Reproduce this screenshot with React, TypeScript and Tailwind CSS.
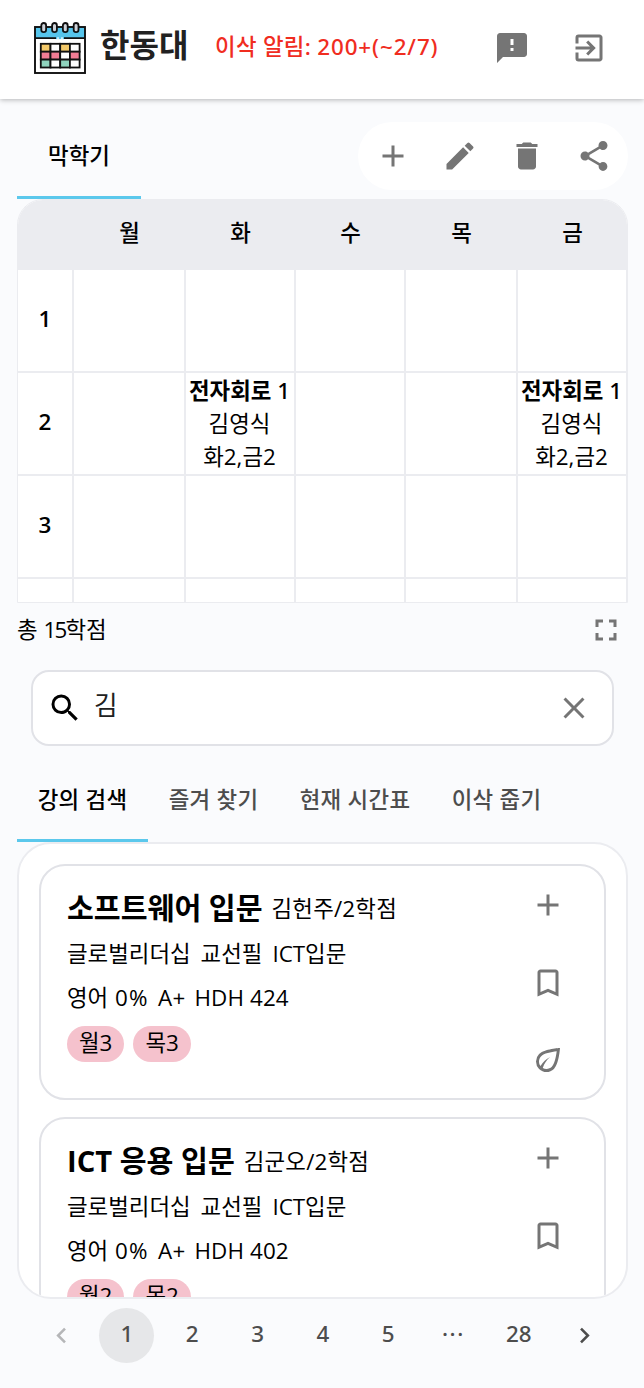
import React from "react";
import {
  MdAdd,
  MdBookmarkBorder,
  MdChevronLeft,
  MdChevronRight,
  MdClose,
  MdDelete,
  MdEdit,
  MdExitToApp,
  MdFeedback,
  MdFullscreen,
  MdOutlineEco,
  MdSearch,
  MdShare,
} from "react-icons/md";

const days = ["월", "화", "수", "목", "금"];

type Lecture = { title: string; section: string; professor: string; time: string };

const circuit: Lecture = { title: "전자회로", section: "1", professor: "김영식", time: "화2,금2" };

const periods: { no: string; cells: (Lecture | null)[] }[] = [
  { no: "1", cells: [null, null, null, null, null] },
  { no: "2", cells: [null, circuit, null, null, circuit] },
  { no: "3", cells: [null, null, null, null, null] },
];

const results = [
  { title: "소프트웨어 입문", professor: "김헌주/2학점", room: "HDH 424", slots: ["월3", "목3"] },
  { title: "ICT 응용 입문", professor: "김군오/2학점", room: "HDH 402", slots: ["월2", "목2"] },
];

function CalendarLogo() {
  const fills = [
    ["#f3c969", "#fff", "#f3c969", "#fff"],
    ["#f27d95", "#f27d95", "#fff", "#f27d95"],
    ["#8fd3bd", "#fff", "#8fd3bd", "#fff"],
  ];
  return (
    <svg width="52" height="52" viewBox="0 0 52 52" className="shrink-0">
      <rect x="1" y="5" width="50" height="46" fill="#fff" />
      <rect x="1" y="5" width="50" height="11" fill="#56c5ec" />
      <rect x="1" y="5" width="50" height="46" fill="none" stroke="#111" strokeWidth="1.9" />
      <path d="M1 16.2H22M30 16.2H51" stroke="#111" strokeWidth="1.8" />
      <path d="M22 16.2H30" stroke="#56c5ec" strokeWidth="1.8" />
      <path d="M23.2 16.2H24.8M27.2 16.2H28.8" stroke="#e6f6fc" strokeWidth="1.8" />
      {[9.7, 20.5, 31.3, 42.1].map((x) => (
        <rect key={x} x={x - 2.4} y="1" width="4.8" height="9.2" rx="2.4" fill="#cfd3da" stroke="#111" strokeWidth="1.8" />
      ))}
      {fills.map((row, r) =>
        row.map((fill, c) => (
          <rect key={`${r}-${c}`} x={6.8 + c * 9.7} y={21.8 + r * 7.9} width="9.7" height="7.9" fill={fill} stroke="#111" strokeWidth="1.8" />
        )),
      )}
    </svg>
  );
}

function Slot({ children }: { children: React.ReactNode }) {
  return <div className="flex w-[65.3px] items-center justify-center">{children}</div>;
}

export default function App() {
  return (
    <div className="flex h-[1388px] w-[644px] flex-col overflow-hidden bg-[#fafbfd] font-['Open_Sans','Noto_Sans_CJK_KR',sans-serif] text-[22.4px] leading-[33px] text-black">
      <header className="flex h-[99px] shrink-0 items-center bg-white pl-[34px] shadow-[0_1px_5px_rgba(0,0,0,0.28)]">
        <div className="mb-[3px]"><CalendarLogo /></div>
        <h1 className="mb-2.5 ml-3.5 w-[115px] whitespace-nowrap text-[32px] leading-10 font-bold text-[#212121]">한동대</h1>
        <p className="mb-1.5 w-[279px] font-['Noto_Sans','Noto_Sans_CJK_KR',sans-serif] font-medium tracking-[0.3px] whitespace-nowrap text-[#f02d1f]">
          이삭 알림: <span className="tracking-[0.9px]">200+(~2/7)</span>
        </p>
        <MdFeedback className="mb-1 size-9 shrink-0 text-[#757575]" />
        <MdExitToApp className="mb-[3px] ml-[41px] size-9 shrink-0 text-[#757575]" />
      </header>

      <div className="flex h-[100px] shrink-0 justify-between pr-4 pl-[17px]">
        <div className="flex w-[124px] flex-col items-center justify-between">
          <span className="mt-10 font-medium">막학기</span>
          <span className="h-[3.5px] w-full bg-[#5bc8ec]" />
        </div>
        <div className="mt-[23px] flex h-[68px] w-[270px] items-center gap-[31px] rounded-full bg-white pl-[17px] text-[36px] text-[#757575]">
          <MdAdd />
          <MdEdit />
          <MdDelete />
          <MdShare />
        </div>
      </div>

      <section className="ml-[17px] h-[404px] w-[611px] shrink-0 overflow-hidden rounded-t-[26px] border border-[#ebecf0] bg-white">
        <div className="grid h-[70px] grid-cols-[56px_112px_110px_110px_112px_110px] items-center bg-[#ebecf0] pb-[5px] text-center font-medium">
          <span />
          {days.map((d) => (
            <span key={d} className="pr-px">{d}</span>
          ))}
        </div>
        {periods.map((p) => (
          <div key={p.no} className="grid h-[103px] grid-cols-[56px_112px_110px_110px_112px_110px] border-b-2 border-[#ebecf0] text-center">
            <div className="flex items-center justify-center border-r-2 border-[#ebecf0] pb-1 font-semibold">{p.no}</div>
            {p.cells.map((cell, i) => (
              <div key={i} className="flex flex-col justify-center border-r-2 border-[#ebecf0] pr-px whitespace-nowrap">
                {cell && (
                  <>
                    <span>
                      <b className="font-semibold">{cell.title}</b>{" "}
                      <span className="font-['Noto_Sans',sans-serif] font-medium">{cell.section}</span>
                    </span>
                    <span>{cell.professor}</span>
                    <span>{cell.time}</span>
                  </>
                )}
              </div>
            ))}
          </div>
        ))}
        <div className="grid h-[24px] grid-cols-[56px_112px_110px_110px_112px_110px]">
          {[0, 1, 2, 3, 4, 5].map((i) => (
            <div key={i} className="border-r-2 border-[#ebecf0]" />
          ))}
        </div>
      </section>

      <div className="flex h-[54px] shrink-0 items-center justify-between pr-5 pl-[17px]">
        <span className="pb-0.5">
          총 <span className="tracking-[-1.8px]">15</span>학점
        </span>
        <MdFullscreen className="size-9 text-[#757575]" />
      </div>

      <div className="mt-[13px] ml-[31px] flex h-[76px] w-[583px] shrink-0 items-center rounded-[18px] border-2 border-[#e1e2e7] bg-white pr-5 pb-px pl-3.5">
        <MdSearch className="size-9" />
        <span className="mb-[5px] ml-[11px] flex-1 text-[25.6px] text-[#212121]">김</span>
        <MdClose className="size-9 text-[#757575]" />
      </div>

      <nav className="ml-[17px] flex h-[96px] shrink-0 font-medium tracking-[0.3px] whitespace-nowrap text-[#4d4d4d]">
        <div className="flex w-[131px] flex-col items-center justify-between text-black">
          <span className="mt-[37px]">강의 검색</span>
          <span className="h-[3.5px] w-full bg-[#5bc8ec]" />
        </div>
        <span className="mt-[37px] w-[131px] text-center">즐겨 찾기</span>
        <span className="mt-[37px] w-[152px] text-center">현재 시간표</span>
        <span className="mt-[37px] w-[131px] text-center">이삭 줍기</span>
      </nav>

      <section className="ml-[17px] flex h-[457px] w-[611px] shrink-0 flex-col gap-[17px] overflow-hidden rounded-[34px] border-2 border-[#ebecf0] bg-white px-5 pt-5">
        {results.map((r) => (
          <article key={r.title} className="flex h-[236px] w-[567px] shrink-0 justify-between rounded-[26px] border-2 border-[#e1e2e7] pr-[38px] pl-[26px]">
            <div className="pt-[25px] whitespace-nowrap">
              <div className="flex h-[34px] items-end gap-[9px]">
                <h2 className="text-[29.2px] leading-[34px] font-bold">{r.title}</h2>
                <span className="tracking-[0.2px]">{r.professor}</span>
              </div>
              <p className="mt-[12px] flex gap-[10px]">
                <span>글로벌리더십</span>
                <span>교선필</span>
                <span>ICT입문</span>
              </p>
              <p className="mt-[11px] flex gap-[9px]">
                <span>
                  영어 <span className="ml-px tracking-[1.3px]">0%</span>
                </span>
                <span className="tracking-[0.3px]">A+</span>
                <span className="tracking-[0.1px]">{r.room}</span>
              </p>
              <div className="mt-[12px] flex gap-[9px]">
                {r.slots.map((s) => (
                  <span key={s} className="h-9 rounded-full bg-[#f5c2cd] px-3">{s}</span>
                ))}
              </div>
            </div>
            <div className="flex flex-col gap-[41.5px] pt-[21px] text-[36px] text-[#757575]">
              <MdAdd />
              <MdBookmarkBorder />
              <MdOutlineEco />
            </div>
          </article>
        ))}
      </section>

      <nav className="ml-[29px] flex h-[73px] shrink-0 items-center font-['Noto_Sans',sans-serif] font-medium text-[#4d4d4d]">
        <Slot><MdChevronLeft className="size-[31px] text-[#b5b6b8]" /></Slot>
        <Slot>
          <span className="flex size-[55px] items-center justify-center rounded-full bg-[#e6e7e9] pb-1">1</span>
        </Slot>
        {["2", "3", "4", "5", "…", "28"].map((n) => (
          <Slot key={n}>
            <span className="pb-1">{n === "…" ? <span className="tracking-[1.5px]">···</span> : n}</span>
          </Slot>
        ))}
        <Slot><MdChevronRight className="size-[31px]" /></Slot>
      </nav>
    </div>
  );
}
